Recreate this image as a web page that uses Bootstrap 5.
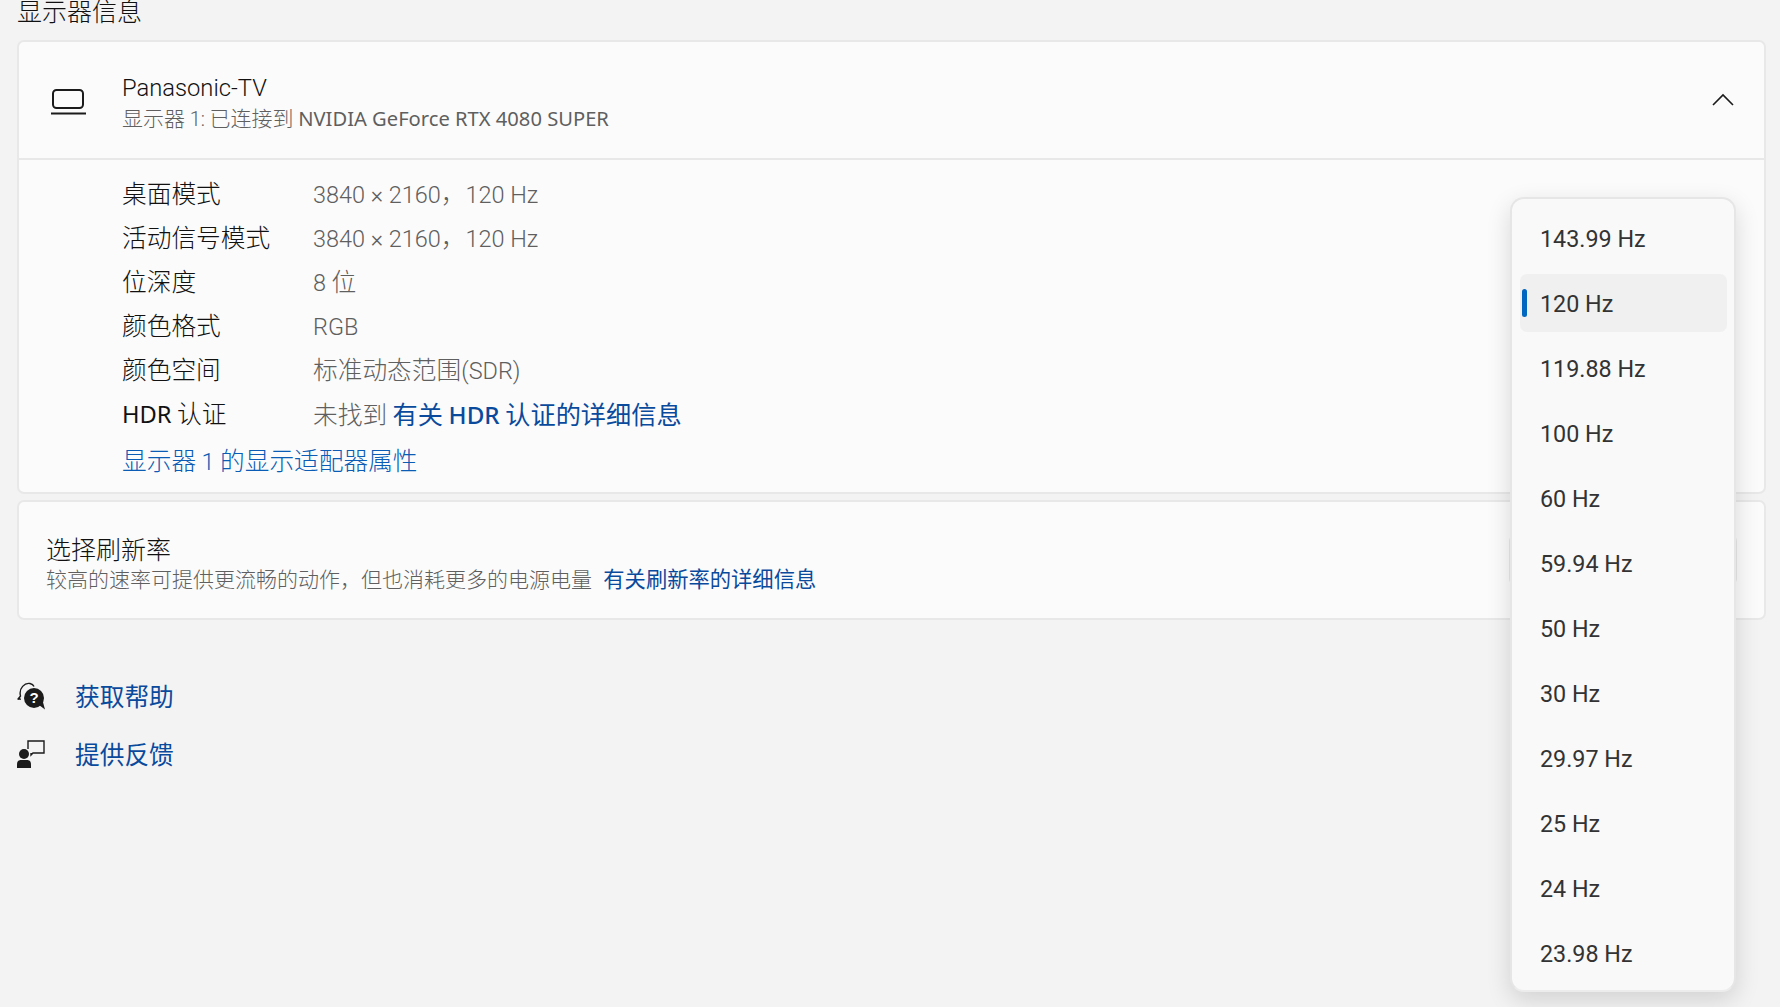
<!DOCTYPE html>
<html lang="zh-CN">
<head>
<meta charset="utf-8">
<title>显示器信息</title>
<link href="https://cdn.jsdelivr.net/npm/bootstrap@5.3.0/dist/css/bootstrap.min.css" rel="stylesheet">
<style>
html,body{height:100%;overflow:hidden;}
body{background:#f3f3f3;color:#111;font-family:"Noto Sans CJK SC",sans-serif;font-size:24.7px;line-height:1.2;font-weight:300;position:relative;}
.lat{font-family:Roboto,"Noto Sans CJK SC",sans-serif;font-size:.95em;font-weight:300;line-height:1;}
.cap{font-family:"Noto Sans","Noto Sans CJK SC",sans-serif;font-size:.96em;font-weight:400;line-height:1;}
a .cap{font-weight:500;}
.page-wrap{padding:0 14px 0 17px;}
.page-title{font-size:25px;font-weight:300;line-height:34px;height:47px;margin:-7px 0 0;}
.panel{background:#fbfbfb;border:2px solid #e8e8e8;border-radius:7px;}
.panel-head{height:118px;border-bottom:2px solid #e8e8e8;padding:0 30px 0 31px;}
.head-icon{width:72px;padding-top:4px;}
.chev{margin-top:-2px;}
.name-block{padding-top:2px;}
.name-block .sub{margin-top:2px;}
.rate-text{padding-top:6px;}
.name{font-size:25px;line-height:30px;}
.sub{font-size:21px;line-height:29px;color:#5f5f5f;}
.panel-body-area{height:332px;padding:11px 0 0 103px;}
.spec{height:44px;}
.spec-k{width:191px;}
.spec-v{color:#5f5f5f;}
.spec-v a.lnk{font-size:25.2px;}
a.lnk{color:#0a4a9c;text-decoration:none;font-weight:400;}
.sub a.lnk{font-size:21.3px;margin-left:2px;}
a.lnk-bright{color:#0a5cb4;text-decoration:none;}
.adapter{margin-top:3px;height:44px;}
.rate-panel{height:120px;margin-top:6px;padding:0 27px;}
.rate-select{width:228px;height:50px;border:2px solid #e8e8e8;border-radius:6px;background:#fdfdfd;}
.help-list{margin-top:54px;gap:14px;}
.help-row{height:44px;gap:30px;}
.help-icon{width:28px;height:28px;}
.flyout{position:absolute;left:1510px;top:197px;width:226px;height:795px;background:#f9f9f9;border:2px solid #e6e6e6;border-radius:14px;box-shadow:0 8px 24px rgba(0,0,0,.14);padding:10px 7px 0 8px;gap:7px;border-bottom-color:#ececec;font-family:Roboto,sans-serif;font-size:23.3px;font-weight:400;}
.fly-item{height:58px;padding:3px 0 0 20px;border-radius:7px;position:relative;color:#333;}
.fly-item.sel{background:#f0f0f0;}
.fly-item.sel::before{content:"";position:absolute;left:2px;top:15px;width:5px;height:28px;background:#0067c0;border-radius:3px;}
</style>
</head>
<body>
<div class="page-wrap">
  <h1 class="page-title">显示器信息</h1>
  <section class="panel">
    <div class="panel-head d-flex align-items-center">
      <div class="head-icon d-flex">
        <svg width="37" height="26" viewBox="0 0 37 26" fill="none" stroke="#1b1b1b" stroke-width="2"><rect x="3" y="1" width="30" height="18" rx="3.5"/><path d="M1 24.500h35"/></svg>
      </div>
      <div class="flex-grow-1 name-block">
        <div class="name"><span class="lat">Panasonic-TV</span></div>
        <div class="sub">显示器 <span class="lat">1:</span> 已连接到 <span class="cap">NVIDIA GeForce RTX 4080 SUPER</span></div>
      </div>
      <svg class="chev" width="22" height="13" viewBox="0 0 22 13" fill="none" stroke="#1b1b1b" stroke-width="1.6"><path d="M1 12 11 2l10 10"/></svg>
    </div>
    <div class="panel-body-area">
      <div class="spec d-flex align-items-center"><div class="spec-k">桌面模式</div><div class="spec-v"><span class="lat">3840 × 2160</span>，<span class="lat">120 Hz</span></div></div>
      <div class="spec d-flex align-items-center"><div class="spec-k">活动信号模式</div><div class="spec-v"><span class="lat">3840 × 2160</span>，<span class="lat">120 Hz</span></div></div>
      <div class="spec d-flex align-items-center"><div class="spec-k">位深度</div><div class="spec-v"><span class="lat">8</span> 位</div></div>
      <div class="spec d-flex align-items-center"><div class="spec-k">颜色格式</div><div class="spec-v"><span class="lat">RGB</span></div></div>
      <div class="spec d-flex align-items-center"><div class="spec-k">颜色空间</div><div class="spec-v">标准动态范围<span class="lat">(SDR)</span></div></div>
      <div class="spec d-flex align-items-center"><div class="spec-k"><span class="cap">HDR</span> 认证</div><div class="spec-v">未找到 <a class="lnk" href="#">有关 <span class="cap">HDR</span> 认证的详细信息</a></div></div>
      <div class="adapter d-flex align-items-center"><a class="lnk-bright" href="#">显示器 <span class="lat">1</span> 的显示适配器属性</a></div>
    </div>
  </section>
  <section class="panel rate-panel d-flex align-items-center justify-content-between">
    <div class="rate-text">
      <div class="name">选择刷新率</div>
      <div class="sub">较高的速率可提供更流畅的动作，但也消耗更多的电源电量&nbsp; <a class="lnk" href="#">有关刷新率的详细信息</a></div>
    </div>
    <div class="rate-select"></div>
  </section>
  <div class="help-list d-flex flex-column">
    <div class="help-row d-flex align-items-center">
      <svg class="help-icon" viewBox="0 0 28 28"><path d="M0.700 17.500 3.500 14C1.500 6 8 0.500 13 1.500c2 .4 3.400 1.400 4 3" fill="none" stroke="#1b1b1b" stroke-width="1.400"/><path d="M0.500 17.500 3 15l1 3z" fill="#1b1b1b"/><circle cx="17" cy="16" r="10" fill="#1b1b1b"/><path d="M22 23l6 4.500-2.500-9z" fill="#1b1b1b"/><text x="17" y="21" text-anchor="middle" fill="#fff" font-size="15" font-weight="700" font-family="Liberation Sans">?</text></svg>
      <a class="lnk" href="#">获取帮助</a>
    </div>
    <div class="help-row d-flex align-items-center">
      <svg class="help-icon" viewBox="0 0 28 28"><circle cx="7" cy="14" r="5" fill="#1b1b1b"/><path d="M0 28v-3.500c0-3.500 2-4.500 4-4.500h6c2 0 4 1 4 4.500V28z" fill="#1b1b1b"/><path d="M11 9V1h16v12H16l-2 2v-2" fill="none" stroke="#1b1b1b" stroke-width="1.400"/></svg>
      <a class="lnk" href="#">提供反馈</a>
    </div>
  </div>
</div>
<div class="flyout d-flex flex-column">
  <div class="fly-item d-flex align-items-center">143.99 Hz</div>
  <div class="fly-item sel d-flex align-items-center">120 Hz</div>
  <div class="fly-item d-flex align-items-center">119.88 Hz</div>
  <div class="fly-item d-flex align-items-center">100 Hz</div>
  <div class="fly-item d-flex align-items-center">60 Hz</div>
  <div class="fly-item d-flex align-items-center">59.94 Hz</div>
  <div class="fly-item d-flex align-items-center">50 Hz</div>
  <div class="fly-item d-flex align-items-center">30 Hz</div>
  <div class="fly-item d-flex align-items-center">29.97 Hz</div>
  <div class="fly-item d-flex align-items-center">25 Hz</div>
  <div class="fly-item d-flex align-items-center">24 Hz</div>
  <div class="fly-item d-flex align-items-center">23.98 Hz</div>
</div>
<script src="https://cdn.jsdelivr.net/npm/bootstrap@5.3.0/dist/js/bootstrap.bundle.min.js"></script>
</body>
</html>
